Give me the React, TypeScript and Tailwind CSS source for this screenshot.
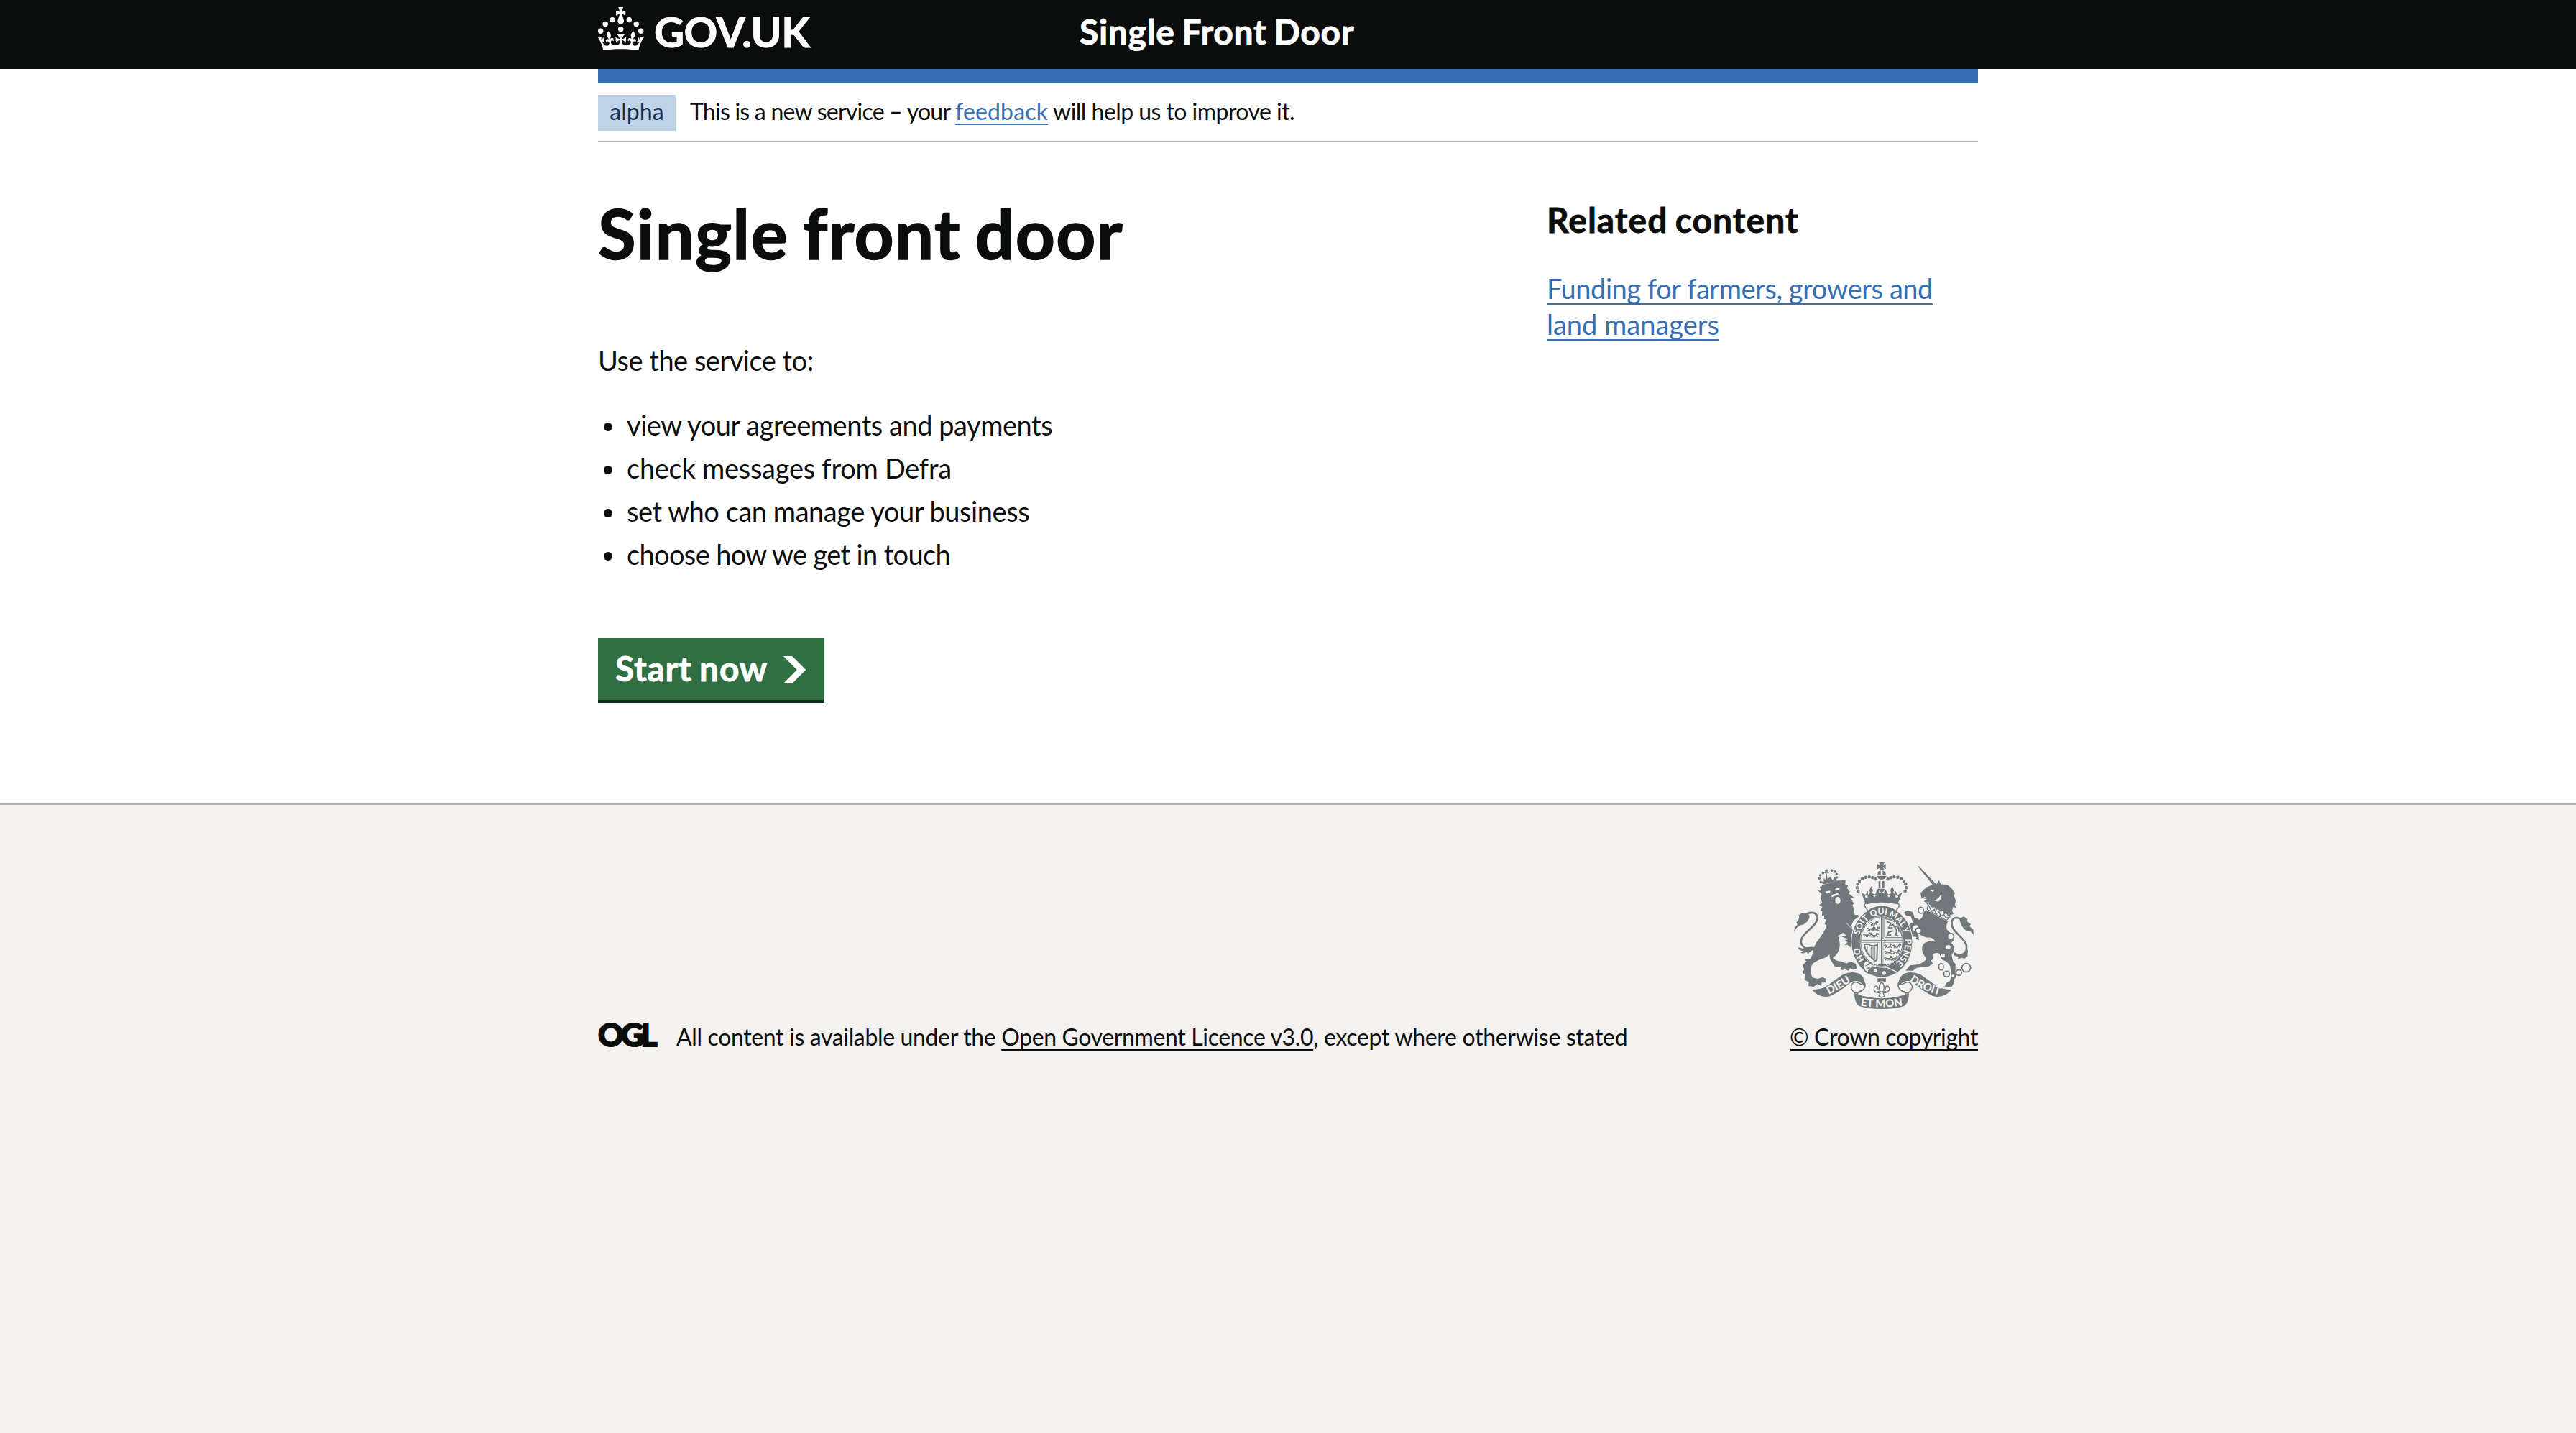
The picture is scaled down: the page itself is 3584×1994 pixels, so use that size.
import type { ReactNode } from "react";

const GREY = "#70787b";
const PAPER = "#f3f2f0";

const LISTS = [
  { text: "view your agreements and payments", cls: "tracking-[-0.47px]" },
  { text: "check messages from Defra", cls: "tracking-[-0.27px]" },
  { text: "set who can manage your business", cls: "tracking-[-0.45px]" },
  { text: "choose how we get in touch", cls: "tracking-[-0.65px]" },
];

function Crown() {
  return (
    <svg viewBox="0 0 64 61" width="64" height="61" fill="white" className="block">
      <circle cx="20" cy="17.6" r="3.7" />
      <circle cx="10.2" cy="23.5" r="3.7" />
      <circle cx="3.7" cy="33.2" r="3.7" />
      <circle cx="31.7" cy="30.6" r="3.7" />
      <circle cx="43.3" cy="17.6" r="3.7" />
      <circle cx="53.2" cy="23.5" r="3.7" />
      <circle cx="59.7" cy="33.2" r="3.7" />
      <path d="M33.1,9.8c.2-.1.3-.3.5-.5l4.6,2.4v-6.8l-4.6,1.5c-.1-.2-.3-.3-.5-.5l1.9-5.9h-6.7l1.9,5.9c-.2.1-.3.3-.5.5l-4.6-1.5v6.8l4.6-2.4c.1.2.3.3.5.5l-2.6,8c-.9,2.8,1.2,5.7,4.1,5.7h0c3,0,5.1-2.9,4.1-5.7l-2.6-8ZM37,37.9s-3.4,3.8-4.1,6.1c2.2,0,4.2-.5,6.4-2.8l-.7,8.5c-2-2.8-4.4-4.1-5.7-3.8.1,3.1.5,6.7,5.8,7.2,3.7.3,6.7-1.5,7-3.8.4-2.6-2-4.3-3.7-1.6-1.4-4.5,2.4-6.1,4.9-3.2-1.9-4.5-1.8-7.7,2.4-10.9,3,4,2.6,7.3-1.2,11.1,2.4-1.3,6.2,0,4,4.6-1.2-2.8-3.7-2.2-4.2.2-.3,1.7.7,3.7,3,4.2,1.9.3,4.7-.9,7-5.9-1.3,0-2.4.7-3.9,1.7l2.4-8c.6,2.3,1.4,3.7,2.2,4.5.6-1.6.5-2.8,0-5.3l5,1.8c-2.6,3.6-5.2,8.7-7.3,17.5-7.4-1.1-15.7-1.7-24.5-1.7h0c-8.8,0-17.1.6-24.5,1.7-2.1-8.9-4.7-13.9-7.3-17.5l5-1.8c-.5,2.5-.6,3.7,0,5.3.8-.8,1.6-2.3,2.2-4.5l2.4,8c-1.5-1-2.6-1.7-3.9-1.7,2.3,5,5.2,6.2,7,5.9,2.3-.4,3.3-2.4,3-4.2-.5-2.4-3-3.1-4.2-.2-2.2-4.6,1.6-6,4-4.6-3.7-3.7-4.2-7.1-1.2-11.1,4.2,3.2,4.3,6.4,2.4,10.9,2.5-2.8,6.3-1.3,4.9,3.2-1.8-2.7-4.1-1-3.7,1.6.3,2.3,3.3,4.1,7,3.8,5.4-.5,5.7-4.2,5.8-7.2-1.3-.2-3.7,1-5.7,3.8l-.7-8.5c2.2,2.3,4.2,2.7,6.4,2.8-.7-2.3-4.1-6.1-4.1-6.1h10.6,0Z" />
    </svg>
  );
}

const PEARLS: [number, number][] = [
  [346, 180], [342, 166], [344, 151], [351, 138], [363, 128], [377, 122], [392, 121], [406, 124], [418, 130],
];

const SMALL_PEARLS: [number, number][] = [
  [190, 142], [184, 127], [188, 114], [199, 104], [236, 94], [249, 98], [256, 109], [257, 123],
];

function MiniLion({ x, y }: { x: number; y: number }) {
  return (
    <path
      transform={`translate(${x} ${y})`}
      d="M0 5q6 -8 10 0l14 0q6 -10 12 -3m-12 3l8 7m-10 -7l-3 8m-8 -8l-6 8m6 -8l4 9M24 4l4 -8l7 2"
      fill="none"
      stroke={GREY}
      strokeWidth="4"
    />
  );
}

function MottoText({ path, offset, size, children }: { path: string; offset: number; size: number; children: ReactNode }) {
  return (
    <text fontSize={size} fontWeight="900" fill={PAPER} textAnchor="middle" fontFamily="Lato, sans-serif">
      <textPath href={path} startOffset={offset}>
        {children}
      </textPath>
    </text>
  );
}

function CoatOfArms() {
  return (
    <svg viewBox="78 60 750 612" width="250" height="204" className="block">
      <defs>
        <path id="garter" d="M445 503A97 113 0 0 1 445 277A97 113 0 0 1 445 503" />
        <path id="dieu" d="M208 617Q262 596 326 551" />
        <path id="droit" d="M548 547Q610 596 698 617" />
        <path id="etmon" d="M352 658Q443 671 534 658" />
        <clipPath id="shield">
          <ellipse cx="444" cy="390" rx="87" ry="102" />
        </clipPath>
      </defs>

      {/* Lion */}
      <g fill={GREY}>
        <path d="M178 178L190 178L186 162L204 154Q230 148 262 136L293 135L292 152L304 157L299 167L312 182L306 190L328 206L313 208L328 232L322 238Q332 262 331 280Q345 276 352 284L340 292L326 304L318 322L322 340L346 356L338 368L350 386L344 396L354 410L340 408L336 418L324 408L312 414L302 404L288 404L302 394L290 386L304 380L276 370L296 366L284 354L262 366Q272 392 268 416Q262 444 240 458Q252 472 278 474L296 482L316 474L336 484L341 502L326 508L312 502L306 512L290 506L278 510L274 498L248 494L228 462L226 444Q216 456 196 462Q156 476 151 492Q146 520 154 540L176 546L196 540L214 546L212 562L194 562L192 576L176 568L160 580L138 576L140 560L122 550L124 528L114 522L120 506L114 488L130 474L124 466L146 462Q156 448 160 424Q162 404 182 380Q204 350 214 326L206 316L212 300L204 296L204 280L194 284L196 264L188 262L196 246L184 238L196 228L188 210L194 192Z" />
        <path d="M78 352Q80 328 92 320L88 310Q98 300 100 290L98 280Q112 268 134 272Q152 282 134 306Q120 322 104 322Q88 330 78 352Z" />
        <path d="M94 414L116 420Q142 410 162 414L166 424Q150 424 136 444L132 434Q118 442 106 438L116 430Q98 428 94 414Z" />
      </g>
      <path d="M128 276C160 262 176 274 176 294C174 322 128 346 112 374C100 398 112 420 152 424" fill="none" stroke={GREY} strokeWidth="8" />
      <path d="M208 182L230 178L228 188L214 190ZM250 170L272 164L264 176L252 178ZM234 196L262 188L266 196L246 200L236 206Z" fill={PAPER} />
      <ellipse cx="261" cy="219" rx="11" ry="15" fill={PAPER} />
      <path d="M232 200L234 216" stroke={PAPER} strokeWidth="3" />
      <path d="M296 312L330 346" stroke={PAPER} strokeWidth="3" fill="none" />
      {/* Lion's crown */}
      <g fill={GREY}>
        {SMALL_PEARLS.map(([x, y]) => (
          <circle key={`${x}-${y}`} cx={x} cy={y} r="5.5" />
        ))}
        <path d="M204 90L216 94L214 88L222 90L218 98L226 104L214 104L218 128L232 120L238 134L250 120L258 136L200 152L190 138L202 142L202 126L214 136L210 106L204 104L210 98Z" />
      </g>
      <path d="M194 158Q226 142 262 138" stroke={GREY} strokeWidth="3" fill="none" />

      {/* Imperial crown */}
      <g fill={GREY}>
        {PEARLS.map(([x, y]) => (
          <g key={`${x}-${y}`}>
            <circle cx={x} cy={y} r="6.8" />
            <circle cx={888 - x} cy={y} r="6.8" />
          </g>
        ))}
        <path d="M432 60H456L449 73L461 66V88L449 80L456 93H432L439 80L426 88V66L439 73Z" />
        <path d="M426 112Q428 96 440 94V112ZM448 94Q460 96 462 112H448ZM424 116H464Q462 130 444 132Q426 130 424 116Z" />
        <path d="M431 138H439V166H431ZM447 138H455V166H447Z" />
        <path d="M358 184L376 196L388 178L386 196L396 186L392 176L400 160L408 176L404 188L416 194L428 170H458L472 194L484 188L480 176L488 160L496 176L492 186L502 196L500 178L512 196L530 184L510 238Q444 218 378 238Z" />
      </g>
      <g fill={PAPER}>
        <path d="M374 200L384 196L386 206L378 208ZM408 198L420 198L414 206ZM468 198L480 198L474 206ZM502 196L514 200L510 208L502 206ZM432 176L442 186L434 190ZM456 176L446 186L454 190Z" />
      </g>

      {/* Unicorn */}
      <g fill={GREY}>
        <path d="M594 76L600 76L674 154L662 160Z" />
        <path d="M606 188L630 164L656 154L674 150L682 134L692 152Q724 150 740 174L750 188L746 198L753 220L750 236L754 250L742 246L738 262L744 276L730 280L728 292L692 268L640 240L630 232L652 222Q628 232 620 222L634 214L622 212L628 204L610 208Z" />
        <path d="M628 258L720 306Q712 322 716 340L728 352Q744 366 744 386L734 396Q746 404 746 428L736 448L742 474L752 484V520L756 538L744 550L748 560L736 580L706 578L716 562L730 554L734 528L730 494Q722 476 696 466L684 440Q664 434 656 446Q664 462 650 470L658 482L640 494L590 500L574 512L544 512L562 490L598 486Q626 474 630 462L616 440Q606 410 624 396Q646 384 668 390Q656 372 634 374Q608 370 596 352L600 384L586 380L590 372L566 368L556 350L552 330L566 312L600 316Q596 322 578 324L572 338L580 348L600 344L594 324L574 310L566 286L546 284L538 268L552 260L572 266L580 284L602 300Q616 290 618 272Z" />
        <path d="M768 296L786 286L802 296L800 306L816 318L810 326L826 340L828 362L814 348L798 346Q778 334 768 296Z" />
        <path d="M742 432L764 444L780 440L804 424L802 452L790 462L778 458L762 464L764 454L748 450Z" />
      </g>
      <path d="M774 296C744 282 732 300 738 326C746 356 796 380 798 410C800 440 782 452 760 446" fill="none" stroke={GREY} strokeWidth="8" />
      <path d="M638 232L632 258L716 306L732 286L722 284L712 272L704 280L698 262L688 270L680 252L672 262L664 246L654 252L648 240Z" fill={PAPER} />
      <path d="M638 236L634 256L714 302L728 288L712 292L704 278L690 284L684 266L672 276L664 256L652 264Z" fill="none" stroke={GREY} strokeWidth="4" />
      <path d="M646 178L664 174L658 183ZM664 220Q688 208 692 190Q700 208 680 224Z" fill={PAPER} />
      <g fill="none" stroke={GREY} strokeWidth="5">
        <ellipse cx="608" cy="260" rx="11" ry="13" fill={PAPER} />
        <circle cx="598" cy="345" r="12" fill={PAPER} />
        <circle cx="732" cy="369" r="13" fill={PAPER} />
        <ellipse cx="692" cy="496" rx="10" ry="14" />
        <circle cx="715" cy="526" r="12" />
        <circle cx="766" cy="520" r="12" />
        <circle cx="797" cy="500" r="18" />
      </g>
      <g fill={PAPER}>
        <circle cx="588" cy="286" r="8" />
        <circle cx="722" cy="414" r="9" />
        <circle cx="700" cy="449" r="8" />
        <circle cx="742" cy="534" r="6" />
      </g>

      {/* Garter */}
      <ellipse cx="445" cy="392" rx="128" ry="148" fill={GREY} stroke={PAPER} strokeWidth="3" />
      <path d="M372 240Q372 228 384 232Q444 218 506 232Q520 230 516 246L502 264Q444 234 388 264Z" fill={PAPER} stroke={GREY} strokeWidth="4" />
      <path d="M390 262Q444 230 500 262" stroke={GREY} strokeWidth="9" fill="none" />
      <ellipse cx="444" cy="390" rx="91" ry="106" fill={PAPER} />
      <MottoText path="#garter" offset={112} size={36}>HO</MottoText>
      <MottoText path="#garter" offset={232} size={36}>SOIT</MottoText>
      <MottoText path="#garter" offset={317} size={36}>QUI</MottoText>
      <MottoText path="#garter" offset={396} size={35}>MAL</MottoText>
      <MottoText path="#garter" offset={450} size={32}>Y</MottoText>
      <MottoText path="#garter" offset={540} size={36}>PENSE</MottoText>
      <path d="M366 482Q378 466 396 480Q412 490 400 502Q390 506 388 522Q366 512 366 482Z" fill={PAPER} stroke={GREY} strokeWidth="5" />
      <path d="M376 492L392 486M380 506L396 496" stroke={GREY} strokeWidth="4" />
      <path d="M402 490Q430 500 466 498L512 520" fill="none" stroke={PAPER} strokeWidth="4" />
      <circle cx="417" cy="512" r="7" fill={PAPER} />
      <circle cx="454" cy="522" r="8" fill={PAPER} />

      {/* Quartered shield */}
      <g clipPath="url(#shield)">
        <path d="M443 280V500M350 387H540" stroke={GREY} strokeWidth="4" />
        <path d="M436 280V380H350M436 500V394H350M450 500V394H540" stroke={GREY} strokeWidth="2" fill="none" />
        <path d="M450 286V380H532M456 294V374H528" stroke={GREY} strokeWidth="3" fill="none" />
        <MiniLion x={394} y={310} />
        <MiniLion x={382} y={334} />
        <MiniLion x={366} y={358} />
        <MiniLion x={400} y={334} />
        <MiniLion x={396} y={360} />
        <MiniLion x={454} y={404} />
        <MiniLion x={454} y={430} />
        <MiniLion x={454} y={456} />
        <MiniLion x={490} y={404} />
        <MiniLion x={486} y={430} />
        <MiniLion x={478} y={456} />
        <path d="M464 306L482 314L476 326L492 320L508 346L502 362L514 368M492 346L474 350L466 366L484 362M490 334L470 334M500 326Q520 330 516 350" fill="none" stroke={GREY} strokeWidth="6" />
        <path d="M460 296Q520 300 528 370" fill="none" stroke={GREY} strokeWidth="4" />
        <path d="M372 404Q384 398 396 406Q414 412 426 404L424 466Q418 476 410 466Q374 436 372 404Z" fill="none" stroke={GREY} strokeWidth="6" />
        <path d="M384 408V440M392 410V448M400 412V456M408 412V462M416 412V466" stroke={GREY} strokeWidth="2.5" />
        <path d="M430 484H462L468 500H424Z" fill={GREY} />
      </g>
      <ellipse cx="444" cy="390" rx="88" ry="103" fill="none" stroke={GREY} strokeWidth="3" />

      {/* Ribbon */}
      <g fill={GREY}>
        <path d="M152 591Q182 592 212 578Q248 552 282 528Q320 512 350 524Q370 536 374 562L376 580Q364 564 344 556Q322 552 304 570Q262 604 230 618Q184 630 152 591Z" />
        <path d="M736 591Q706 592 676 578Q640 552 606 528Q568 512 538 524Q518 536 514 562L512 580Q524 564 544 556Q566 552 584 570Q626 604 658 618Q704 630 736 591Z" />
        <path d="M330 606Q384 628 444 628Q504 628 558 606Q558 646 538 660Q500 672 444 672Q388 672 350 660Q330 646 330 606Z" />
      </g>
      <g fill="none" stroke={GREY} strokeWidth="4">
        <path d="M374 562Q380 584 362 594Q342 600 344 612M374 580Q364 604 334 606Q312 590 318 572Q326 556 344 562Q354 568 372 572" />
        <path d="M514 562Q508 584 526 594Q546 600 544 612M514 580Q524 604 554 606Q576 590 570 572Q562 556 544 562Q534 568 516 572" />
      </g>
      <MottoText path="#dieu" offset={70} size={45}>DIEU</MottoText>
      <MottoText path="#droit" offset={84} size={45}>DROIT</MottoText>
      <MottoText path="#etmon" offset={92} size={45}>ET MON</MottoText>
      <path d="M427 544H462V562L444 554L427 562Z" fill={GREY} />
      <path d="M444 558Q460 578 452 594Q460 594 460 584Q462 572 472 578Q482 590 468 602L450 606L456 618L444 624L432 618L438 606L420 602Q406 590 416 578Q426 572 428 584Q428 594 436 594Q428 578 444 558ZM424 600H464" fill="none" stroke={GREY} strokeWidth="4" />
    </svg>
  );
}

export default function App() {
  return (
    <div className="flex min-h-[1994px] w-full flex-col bg-white font-['Lato',sans-serif] text-[#0b0c0c]">
      <header className="h-24 bg-[#0b0d0c]">
        <div className="mx-auto flex w-[1920px] items-start text-white">
          <div className="flex w-[670px] pt-[10px]">
            <Crown />
            <span className="-mt-px ml-[14px] text-[58px] leading-[70px] font-bold tracking-[-0.5px] [-webkit-text-stroke:1px_white]">GOV.UK</span>
          </div>
          <span className="mt-[19px] text-[48px] leading-[50px] font-bold tracking-[0.7px] [word-spacing:-2.5px] [-webkit-text-stroke:0.8px_white]">Single Front Door</span>
        </div>
      </header>

      <div className="mx-auto w-[1920px]">
        <div className="h-5 bg-[#366fb2]" />
        <div className="flex h-[82px] items-start border-b-2 border-[#b2b2b2] pt-4 text-[32px] leading-[46px]">
          <strong className="h-[50px] w-[108px] bg-[#bfd3e8] text-center font-normal tracking-[0.1px] text-[#16304f]">alpha</strong>
          <p className="ml-5 whitespace-pre">
            <span className="tracking-[-0.76px]">This is a new service – your </span>
            <a className="tracking-[0.15px] text-[#366fb2] underline decoration-2 underline-offset-[5px] [text-decoration-skip-ink:none]">feedback</a>
            <span className="tracking-[-0.54px]"> will help us to improve it.</span>
          </p>
        </div>

        <main className="flex h-[920px] justify-between">
          <div className="pt-[76px]">
            <h1 className="text-[96px] leading-[100px] font-bold tracking-[1.4px] [word-spacing:-5px] [-webkit-text-stroke:1.6px_#0b0c0c]">Single front door</h1>
            <p className="mt-[102px] text-[38px] leading-[50px] tracking-[-0.5px]">Use the service to:</p>
            <ul className="mt-10 flex flex-col gap-[10px] text-[38px] leading-[50px]">
              {LISTS.map((item) => (
                <li key={item.text} className="flex items-center">
                  <span className="mt-[6px] mr-5 ml-2 size-3 rounded-full bg-[#0b0c0c]" />
                  <span className={item.cls}>{item.text}</span>
                </li>
              ))}
            </ul>
            <a className="mt-[92px] flex h-[90px] w-[315px] items-start border-b-4 border-[#0c2f1a] bg-[#306f42] px-6 text-white">
              <span className="mt-[23px] w-[212px] text-[48px] leading-[38px] font-bold tracking-[0.7px] whitespace-nowrap [word-spacing:-2px] [-webkit-text-stroke:0.8px_white]">Start now</span>
              <svg viewBox="0 0 33 40" width="35" height="38" fill="currentColor" className="mt-[25px] ml-5 shrink-0">
                <path d="M0 0h13l20 20-20 20H0l20-20z" />
              </svg>
            </a>
          </div>
          <aside className="w-[600px] pt-[83px]">
            <h2 className="text-[48px] leading-[50px] font-bold tracking-[1px] [word-spacing:-2.2px] [-webkit-text-stroke:0.8px_#0b0c0c]">Related content</h2>
            <p className="mt-[45px] text-[38px] leading-[50px] whitespace-nowrap text-[#366fb2]">
              <a className="underline decoration-2 underline-offset-[6px] [text-decoration-skip-ink:none]">
                <span className="tracking-[-0.45px]">Funding for farmers, growers and</span>
                <br />
                land managers
              </a>
            </p>
          </aside>
        </main>
      </div>

      <footer className="grow border-t-2 border-[#b1b3b4] bg-[#f3f2f0] pt-20">
        <div className="mx-auto flex w-[1920px] items-end justify-between text-[32px] leading-10">
          <div className="flex whitespace-pre">
            <span className="h-10 w-[109px] text-[44px] leading-[32px] font-black tracking-[-4px] [-webkit-text-stroke:2px_#0b0c0c]">OGL</span>
            <p>
              <span className="tracking-[-0.35px]">All content is available under the </span>
              <a className="tracking-[-0.37px] underline decoration-2 underline-offset-[5px] [text-decoration-skip-ink:none]">Open Government Licence v3.0</a>
              <span className="tracking-[-0.31px]">, except where otherwise stated</span>
            </p>
          </div>
          <div className="flex flex-col items-end">
            <div className="mr-[6px]">
              <CoatOfArms />
            </div>
            <a className="mt-[19px] tracking-[-0.38px] underline decoration-2 underline-offset-[5px] [text-decoration-skip-ink:none]">© Crown copyright</a>
          </div>
        </div>
      </footer>
    </div>
  );
}
